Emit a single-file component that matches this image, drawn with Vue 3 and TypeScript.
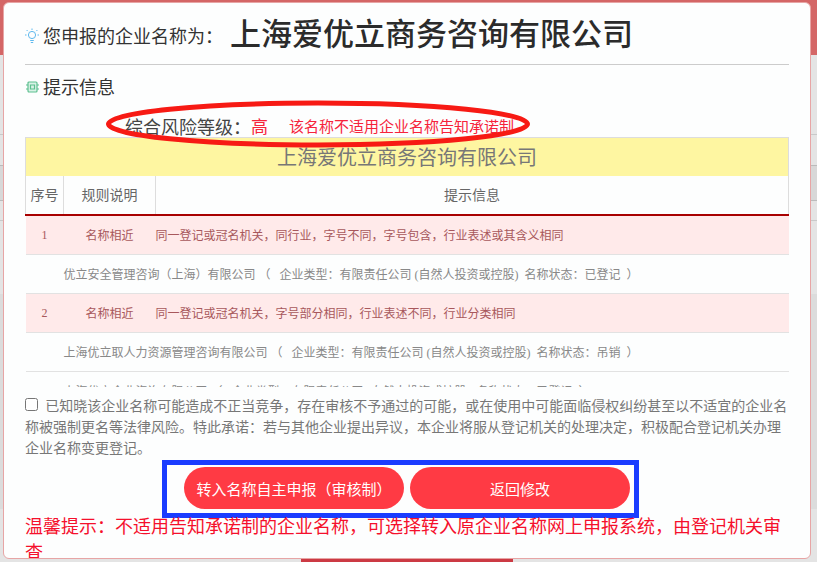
<script setup lang="ts">
interface RiskRow {
  no: number
  rule: string
  hint: string
  company: string
  status: string
}

const companyName = '上海爱优立商务咨询有限公司'

const rows: RiskRow[] = [
  {
    no: 1,
    rule: '名称相近',
    hint: '同一登记或冠名机关\uFF0C同行业\uFF0C字号不同\uFF0C字号包含\uFF0C行业表述或其含义相同',
    company: '优立安全管理咨询\uFF08上海\uFF09有限公司',
    status: '已登记',
  },
  {
    no: 2,
    rule: '名称相近',
    hint: '同一登记或冠名机关\uFF0C字号部分相同\uFF0C行业表述不同\uFF0C行业分类相同',
    company: '上海优立取人力资源管理咨询有限公司',
    status: '吊销',
  },
]
</script>

<template>
  <div class="page">
    <div class="band"></div>
    <div class="stripe s1"></div>
    <div class="stripe s2"></div>
    <div class="stripe s3"></div>
    <div class="stripe s4"></div>
    <div class="stripe s5"></div>
    <div class="foot-bar"></div>

    <section class="modal">
      <header class="title-row">
        <svg class="ico bulb" width="14" height="16" viewBox="0 0 14 16" fill="none" stroke="#5fb9ee" stroke-width="1">
          <circle cx="7" cy="7" r="3.6" />
          <path d="M5.2 12.5h3.6M5.8 14.5h2.4M7 .5v1.5M1.6 2l1.1 1.1M12.4 2l-1.1 1.1M0 7h1.5M12.5 7H14" />
        </svg>
        <span class="label">您申报的企业名称为&#xFF1A;</span>
        <h1 class="name">{{ companyName }}</h1>
      </header>

      <div class="tips-row">
        <svg class="ico chip" width="13" height="12" viewBox="0 0 13 12" fill="#d9f2e6" stroke="#5dbf8f" stroke-width="1.2">
          <rect x="2" y="1" width="9" height="10" rx="1" />
          <path d="M0 4h2M0 8h2M11 4h2M11 8h2M4.5 4h4v4h-4z" />
        </svg>
        <span class="label">提示信息</span>
      </div>

      <div class="risk-row">
        <span class="risk-label">综合风险等级&#xFF1A;</span>
        <span class="risk-level">高</span>
        <span class="risk-note">该名称不适用企业名称告知承诺制</span>
      </div>
      <svg class="ring" width="428" height="50" viewBox="0 0 428 50" fill="none">
        <ellipse cx="214" cy="25" rx="209.5" ry="21" stroke="#f71a14" stroke-width="5" />
      </svg>

      <div class="table-box">
        <div class="table-name">{{ companyName }}</div>
        <table class="risk-table">
          <colgroup>
            <col class="c-no" />
            <col class="c-rule" />
            <col />
          </colgroup>
          <thead>
            <tr>
              <th>序号</th>
              <th>规则说明</th>
              <th>提示信息</th>
            </tr>
          </thead>
          <tbody>
            <template v-for="row in rows" :key="row.no">
              <tr class="hit">
                <td class="center">{{ row.no }}</td>
                <td class="center">{{ row.rule }}</td>
                <td>{{ row.hint }}</td>
              </tr>
              <tr class="detail">
                <td></td>
                <td colspan="2">{{ row.company }}&nbsp;&#xFF08;&nbsp;&nbsp;&nbsp;企业类型&#xFF1A;有限责任公司&nbsp;(自然人投资或控股)&nbsp;&nbsp;名称状态&#xFF1A;{{ row.status }}&nbsp;&nbsp;&#xFF09;</td>
              </tr>
            </template>
            <tr class="detail">
              <td></td>
              <td colspan="2">上海优立企业咨询有限公司&nbsp;&#xFF08;&nbsp;&nbsp;&nbsp;企业类型&#xFF1A;有限责任公司&nbsp;(自然人投资或控股)&nbsp;&nbsp;名称状态&#xFF1A;已登记&nbsp;&nbsp;&#xFF09;</td>
            </tr>
          </tbody>
        </table>
      </div>

      <label class="promise">
        <input type="checkbox" />
        已知晓该企业名称可能造成不正当竞争&#xFF0C;存在审核不予通过的可能&#xFF0C;或在使用中可能面临侵权纠纷甚至以不适宜的企业名称被强制更名等法律风险。特此承诺&#xFF1A;若与其他企业提出异议&#xFF0C;本企业将服从登记机关的处理决定&#xFF0C;积极配合登记机关办理企业名称变更登记。
      </label>

      <div class="actions">
        <button class="btn" type="button">转入名称自主申报&#xFF08;审核制&#xFF09;</button>
        <button class="btn" type="button">返回修改</button>
      </div>

      <p class="notice">温馨提示&#xFF1A;不适用告知承诺制的企业名称&#xFF0C;可选择转入原企业名称网上申报系统&#xFF0C;由登记机关审查</p>
    </section>
  </div>
</template>

<style>
html,
body {
  margin: 0;
  overflow: hidden;
}
</style>

<style scoped>
.page {
  position: relative;
  width: 817px;
  height: 562px;
  overflow: hidden;
  background: #e4e4e4;
  font-family: "Noto Sans CJK SC", sans-serif;
}

.band {
  height: 55px;
  background: #d46666;
}

.stripe {
  height: 1px;
  background: #c9c9c9;
}

.s1 {
  margin-top: 79px;
}

.s2 {
  margin-top: 30px;
  height: 34px;
  background: #d8d8d8;
  border-top: 1px solid #bbb;
  border-bottom: 1px solid #bbb;
}

.s3 {
  margin-top: 19px;
}

.s4 {
  margin-top: 73px;
  height: 215px;
  background: #dcdcdc;
}

.s5 {
  height: 43px;
  background: #e4e4e4;
}

.foot-bar {
  position: absolute;
  left: 301px;
  bottom: 0;
  width: 212px;
  height: 3px;
  background: #cc3a44;
}

.modal {
  position: absolute;
  left: 3px;
  top: 2px;
  width: 808px;
  height: 557px;
  box-sizing: border-box;
  padding: 0 21px;
  overflow: hidden;
  background: #fdfefe;
  border: 1px solid #e7a5a5;
  border-radius: 6px;
}

.title-row {
  display: flex;
  align-items: center;
  height: 61px;
  border-bottom: 1px solid #cccccc;
  box-sizing: content-box;
  color: #333;
}

.ico {
  flex: none;
  margin-right: 4px;
}

.bulb {
  margin-top: 4px;
}

.chip {
  margin: 3px 4px 0 1px;
}

.label {
  font-size: 18px;
  line-height: 26px;
  color: #333;
}

.title-row .label {
  padding-top: 2px;
}

.name {
  margin: -3px 0 0 7px;
  font-size: 31px;
  line-height: 44px;
  font-weight: 500;
  color: #2b2b2b;
}

.tips-row {
  display: flex;
  align-items: center;
  height: 41px;
}

.risk-row {
  display: flex;
  align-items: center;
  height: 31px;
  box-sizing: border-box;
  padding: 8px 0 0 100px;
}

.risk-label {
  font-size: 18px;
  color: #444;
}

.risk-level {
  font-size: 17px;
  color: #f6233b;
  margin-right: 21px;
}

.risk-note {
  font-size: 15px;
  color: #f6233b;
}

.ring {
  position: absolute;
  left: 100px;
  top: 96px;
  pointer-events: none;
}

.table-box {
  height: 250px;
  overflow: hidden;
  border-top: 1px solid #ddd;
  box-sizing: border-box;
}

.table-name {
  height: 38px;
  line-height: 38px;
  font-size: 20px;
  text-align: center;
  color: #777;
  background: #fef6a1;
  border-left: 1px solid #ddd;
  border-right: 1px solid #ddd;
}

.risk-table {
  width: 100%;
  table-layout: fixed;
  border-collapse: collapse;
  font-family: "Liberation Serif", "Noto Sans CJK SC", serif;
}

.c-no {
  width: 38px;
}

.c-rule {
  width: 92px;
}

th {
  height: 36px;
  padding: 0 0 2px;
  font-family: "Noto Sans CJK SC", sans-serif;
  font-size: 14px;
  font-weight: 400;
  color: #666;
  border-left: 1px solid #ddd;
  border-right: 1px solid #ddd;
  border-bottom: 2px solid #a80000;
}

td {
  height: 38px;
  padding: 0;
  font-size: 12px;
  border-bottom: 1px solid #e2e2e2;
  white-space: nowrap;
}

.center {
  text-align: center;
}

.hit td {
  color: #a8585c;
  background: #ffeaea;
}

.detail td {
  color: #888;
}

.promise {
  display: block;
  margin-top: 8px;
  font-size: 14px;
  line-height: 21px;
  color: #777;
}

.promise input {
  width: 13px;
  height: 13px;
  margin: 0 4px 0 0;
}

.actions {
  display: flex;
  gap: 6px;
  width: 477px;
  height: 58px;
  box-sizing: border-box;
  margin: 2px 0 0 137px;
  padding: 2px 0 0 17px;
  border: 5px solid #1a3cff;
}

.btn {
  width: 220px;
  height: 42px;
  padding: 0;
  border: 0;
  border-radius: 21px;
  background: #ff3a44;
  color: #fff;
  font-family: inherit;
  font-size: 15px;
}

.notice {
  margin: -6px 0 0;
  font-size: 18px;
  line-height: 26px;
  color: #f5102c;
}
</style>
